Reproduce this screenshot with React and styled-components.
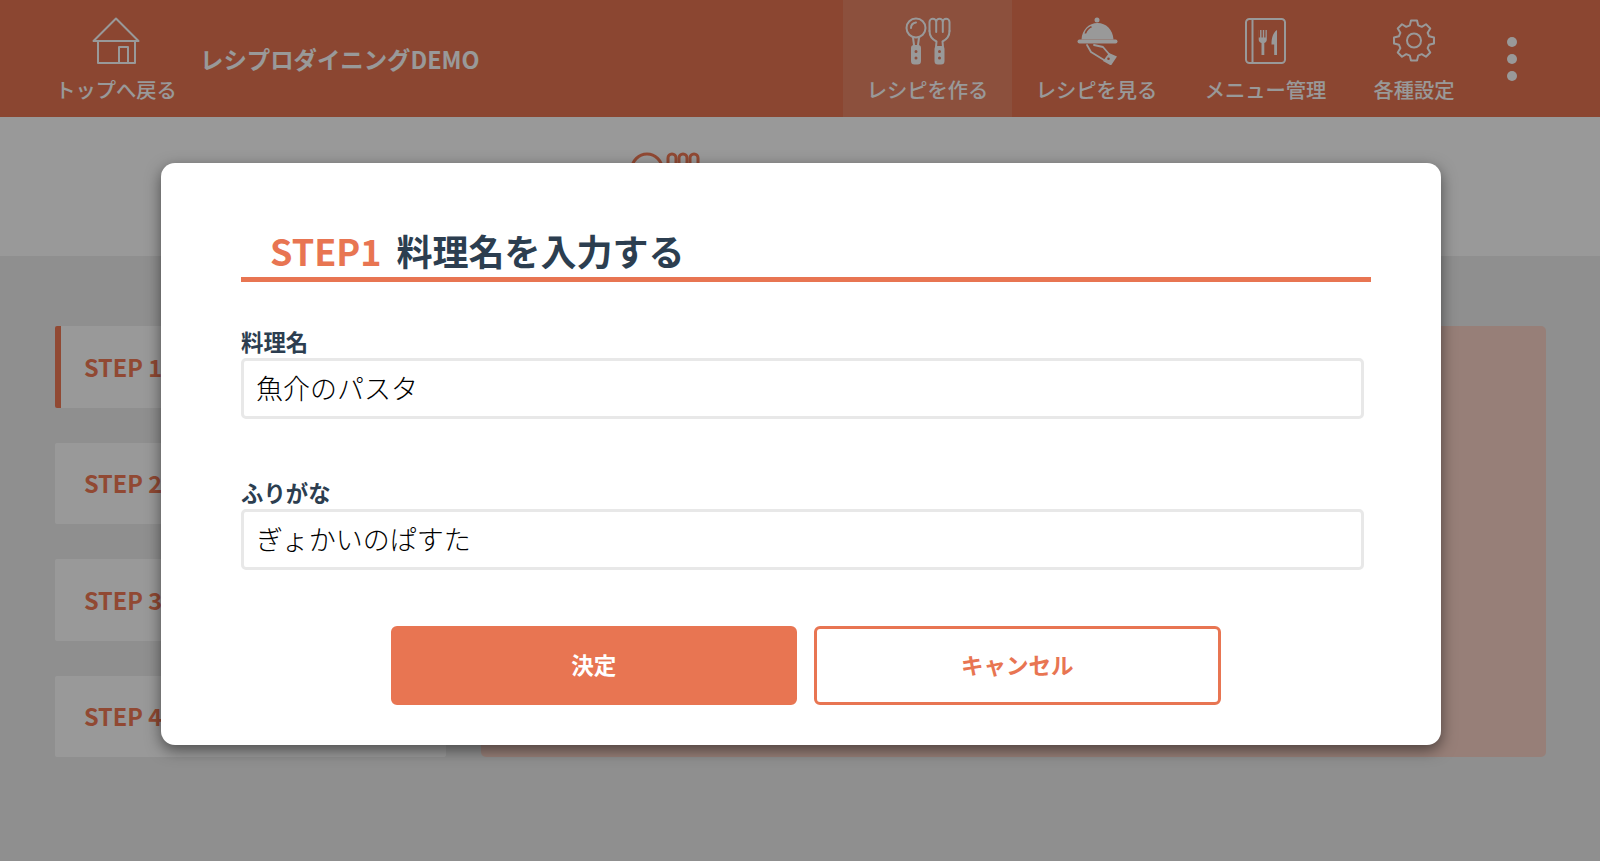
import React from "react";
import styled, { createGlobalStyle } from "styled-components";

const Global = createGlobalStyle`
  html, body { margin: 0; padding: 0; height: 100%; background: #eee; overflow: hidden; }
  * { box-sizing: border-box; }
  body { font-family: "Noto Sans CJK JP", "Noto Sans", sans-serif; }
`;
const Page = styled.div`
  position: relative;
  width: 1600px;
  height: 861px;
  display: flex;
  flex-direction: column;
  background: #eee;
`;
const Header = styled.header`
  height: 117px;
  flex: none;
  display: flex;
  align-items: stretch;
  padding: 0 55px;
  background: #e87552;
  color: #fff;
`;
const NavItem = styled.div`
  width: ${(p) => p.$w}px;
  flex: none;
  display: flex;
  flex-direction: column;
  align-items: center;
  padding-top: 17px;
  background: ${(p) => (p.$active ? "rgba(255,255,255,.12)" : "transparent")};
`;
const NavLabel = styled.span`
  font-size: 20.3px;
  font-weight: 500;
  line-height: 28px;
  margin-top: 10px;
  white-space: nowrap;
`;
const Brand = styled.div`
  flex: 1;
  display: flex;
  align-items: center;
  padding: 1px 0 0 23px;
  font-size: 23.4px;
  font-weight: 700;
`;
const Dots = styled.div`
  width: 67px;
  flex: none;
  display: flex;
  flex-direction: column;
  align-items: center;
  justify-content: center;
  gap: 7px;
`;
const Dot = styled.i`
  width: 10px;
  height: 10px;
  border-radius: 50%;
  background: #fff;
`;
const Band = styled.div`
  height: 139px;
  flex: none;
  background: #fff;
  color: #f27a55;
  display: flex;
  padding: 35px 0 0 630px;
`;
const Body = styled.main`
  display: flex;
  gap: 35px;
  padding: 70px 54px 0 55px;
`;
const Steps = styled.div`
  width: 391px;
  height: 431px;
  display: grid;
  grid-template-rows: repeat(4, 1fr);
  gap: 35px;
`;
const Step = styled.div`
  display: flex;
  align-items: center;
  padding-left: ${(p) => (p.$active ? 23 : 29)}px;
  background: #fff;
  border-left: ${(p) => (p.$active ? "6px solid #f27a55" : "none")};
  border-radius: 2px;
  font-size: 23.5px;
  font-weight: 700;
  color: #f27a55;
`;
const Panel = styled.div`
  flex: 1;
  height: 431px;
  background: #fcd4c8;
  border-radius: 5px;
`;
const Overlay = styled.div`
  position: absolute;
  inset: 0;
  background: rgba(0, 0, 0, 0.4);
`;
const Modal = styled.section`
  position: absolute;
  left: 161px;
  top: 163px;
  width: 1280px;
  height: 582px;
  padding: 66px 70px 0 80px;
  background: #fff;
  border-radius: 14px;
  box-shadow: 0 5px 15px rgba(0, 0, 0, 0.5);
`;
const Title = styled.h2`
  margin: 0;
  height: 53px;
  padding-left: 29px;
  border-bottom: 5px solid #e87552;
  font-size: 36px;
  line-height: 42px;
  font-weight: 700;
  color: #2c3e50;
  white-space: nowrap;
`;
const TitleStep = styled.span`
  color: #e87552;
  margin-right: 15px;
`;
const Field = styled.div`
  width: 1123px;
  margin-top: ${(p) => p.$top}px;
`;
const Label = styled.label`
  display: block;
  margin-bottom: 4px;
  font-size: 22.4px;
  line-height: 26px;
  font-weight: 700;
  color: #2c3e50;
`;
const Input = styled.input`
  display: block;
  width: 100%;
  height: 61px;
  padding: 0 12px 2px;
  border: 3px solid #e8e8e8;
  border-radius: 5px;
  outline: none;
  background: #fff;
  font-family: "Noto Sans CJK JP", sans-serif;
  font-weight: 300;
  font-size: 27px;
  color: #000;
`;
const Actions = styled.div`
  display: flex;
  justify-content: center;
  gap: 17px;
  width: 1123px;
  margin: 56px 0 0 3px;
`;
const Button = styled.button`
  width: 406.5px;
  height: 79px;
  padding: 0 0 3px;
  border: 3px solid #e87552;
  border-radius: 6px;
  background: ${(p) => (p.$primary ? "#e87552" : "#fff")};
  color: ${(p) => (p.$primary ? "#fff" : "#e87552")};
  font-family: "Noto Sans CJK JP", sans-serif;
  font-size: 22.5px;
  font-weight: 700;
`;

const Stroke = styled.svg`
  display: block;
  flex: none;
  fill: none;
  stroke: currentColor;
  stroke-width: ${(p) => p.$sw || 2};
  stroke-linejoin: round;
  stroke-linecap: round;
`;
const Solid = styled.path`
  fill: currentColor;
  stroke: none;
`;

const HomeIcon = () => (
  <Stroke width="48" height="48" viewBox="0 0 48 48">
    <path d="M1.500 24 24 1.500 46.500 24H1.500Z" />
    <path d="M6 24v22h37V24" />
    <path d="M27 46V30h9v16" />
  </Stroke>
);
const CutleryIcon = () => (
  <Stroke width="48" height="48" viewBox="0 0 48 48">
    <circle cx="12" cy="11" r="9.500" />
    <path d="M7 11c0-3 2-5 5-5.500" />
    <path d="M9 20.500l1 7.500M15 20.500l-1 7.500" />
    <Solid fillRule="evenodd" d="M10 28h4a3 3 0 0 1 3 3v13a3.500 3.500 0 0 1-3.500 3.500h-3A3.500 3.500 0 0 1 7 44V31a3 3 0 0 1 3-3Zm2 5a1.500 1.500 0 1 0 0 3 1.500 1.500 0 0 0 0-3Zm0 6.500a1.500 1.500 0 1 0 0 3 1.500 1.500 0 0 0 0-3Z" />
    <path d="M25.500 14V5a3.300 3.300 0 0 1 6.700 0v10M32.200 5a3.300 3.300 0 0 1 6.600 0v10M38.800 5a3.300 3.300 0 0 1 6.700 0v9" />
    <path d="M25.500 14c0 6 4 9 7 10.500l-.5 5.500M45.500 14c0 6-4 9-7 10.500l.5 5.500" />
    <Solid fillRule="evenodd" d="M33.500 29h4a3 3 0 0 1 3 3v12a3.500 3.500 0 0 1-3.500 3.500h-3a3.500 3.500 0 0 1-3.500-3.500V32a3 3 0 0 1 3-3Zm2 4a1.500 1.500 0 1 0 0 3 1.500 1.500 0 0 0 0-3Zm0 6.500a1.500 1.500 0 1 0 0 3 1.500 1.500 0 0 0 0-3Z" />
  </Stroke>
);
const ClocheIcon = () => (
  <Stroke width="48" height="48" viewBox="0 0 48 48">
    <circle cx="24" cy="3" r="2.500" fill="currentColor" stroke="none" />
    <Solid fillRule="evenodd" d="M24.500 6c8.500 0 15.500 6.500 16 16.500h-32C9 12.500 16 6 24.500 6Zm-6.500 3c-3 1.500-5.500 3.500-6.500 7.500h1.700c1-3 3-5 5.800-6.300L18 9Z" />
    <path d="M6.500 24.500h36" strokeWidth="4" />
    <path d="M14 28l4 7 13 8M21 28l9 2 6 7" strokeWidth="1.800" />
    <Solid fillRule="evenodd" d="M36 36l8 3.500-6 9-8-4.500 6-8Zm-.500 4.500a1.300 1.300 0 1 0 0 2.600 1.300 1.300 0 0 0 0-2.600Z" />
  </Stroke>
);
const MenuIcon = () => (
  <Stroke width="48" height="48" viewBox="0 0 48 48">
    <rect x="4" y="2" width="39" height="44" rx="3.500" />
    <path d="M10.500 2v44" />
    <Solid d="M15.500 13h1.300v7.500h1.300V13h1.400v7.500h1.300V13h1.400v7.500h1.300V13h1.300v9.500c0 1.700-1 3-2.500 3.500v12h-2.800V26c-1.700-.5-2.800-1.800-2.800-3.500V13Z" />
    <Solid d="M35 13v25h-2.800V27.500H29.500c0-6.500 1.500-12 5.500-14.500Z" />
  </Stroke>
);
const gearPath = (() => {
  const pt = (r, a) => `${(24 + r * Math.sin(a)).toFixed(2)} ${(23.5 - r * Math.cos(a)).toFixed(2)}`;
  let d = "";
  for (let i = 0; i < 8; i++) {
    const a = (i * Math.PI) / 4;
    d += `${i ? "L" : "M"}${pt(15.7, a - 0.27)}L${pt(20.2, a - 0.15)}L${pt(20.2, a + 0.15)}L${pt(15.7, a + 0.27)}`;
  }
  return d + "Z";
})();
const GearIcon = () => (
  <Stroke width="48" height="48" viewBox="0 0 48 48">
    <circle cx="24" cy="23.500" r="7" />
    <path d={gearPath} />
  </Stroke>
);
const PeekIcon = () => (
  <Stroke width="72" height="40" viewBox="0 0 72 40" $sw={3}>
    <circle cx="17" cy="17" r="15" />
    <path d="M10 20l7-7" />
    <rect x="38" y="2" width="8" height="24" rx="4" />
    <rect x="49" y="2" width="8" height="24" rx="4" />
    <rect x="60" y="2" width="8" height="24" rx="4" />
  </Stroke>
);

const nav = [
  { label: "レシピを作る", icon: <CutleryIcon />, w: 169, active: true },
  { label: "レシピを見る", icon: <ClocheIcon />, w: 169 },
  { label: "メニュー管理", icon: <MenuIcon />, w: 169 },
  { label: "各種設定", icon: <GearIcon />, w: 128 },
];

export default function App() {
  return (
    <Page>
      <Global />
      <Header>
        <NavItem $w={122}>
          <HomeIcon />
          <NavLabel>トップへ戻る</NavLabel>
        </NavItem>
        <Brand>レシプロダイニングDEMO</Brand>
        {nav.map((n) => (
          <NavItem key={n.label} $w={n.w} $active={n.active}>
            {n.icon}
            <NavLabel>{n.label}</NavLabel>
          </NavItem>
        ))}
        <Dots><Dot /><Dot /><Dot /></Dots>
      </Header>
      <Band><PeekIcon /></Band>
      <Body>
        <Steps>
          <Step $active>STEP 1</Step>
          <Step>STEP 2</Step>
          <Step>STEP 3</Step>
          <Step>STEP 4</Step>
        </Steps>
        <Panel />
      </Body>
      <Overlay />
      <Modal>
        <Title><TitleStep>STEP1</TitleStep>料理名を入力する</Title>
        <Field $top={46}>
          <Label>料理名</Label>
          <Input readOnly value="魚介のパスタ" />
        </Field>
        <Field $top={60}>
          <Label>ふりがな</Label>
          <Input readOnly value="ぎょかいのぱすた" />
        </Field>
        <Actions>
          <Button $primary>決定</Button>
          <Button>キャンセル</Button>
        </Actions>
      </Modal>
    </Page>
  );
}
